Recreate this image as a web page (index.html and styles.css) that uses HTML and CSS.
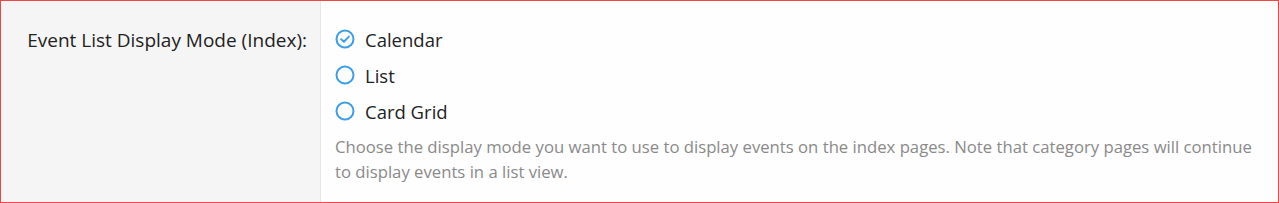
FILE: index.html
```html
<!DOCTYPE html>
<html>
    <head>
        <meta charset="UTF-8">
        <title>Event Settings</title>
        <link rel="stylesheet" href="styles.css">
    </head>
    <body>
        <div class="setting-row">
            <div class="setting-label">Event List Display Mode (Index):</div>
            <div class="setting-field">
                <label class="radio">
                    <svg class="radio-icon" viewBox="0 0 20 20" width="20" height="20">
                        <circle cx="10" cy="10" r="8.5" fill="none" stroke="#3d9fe6" stroke-width="2"/>
                        <path d="M6.2 10.2 L8.9 12.8 L13.9 7.6" fill="none" stroke="#3d9fe6" stroke-width="2" stroke-linecap="round" stroke-linejoin="round"/>
                    </svg>
                    Calendar
                </label>
                <label class="radio">
                    <svg class="radio-icon" viewBox="0 0 20 20" width="20" height="20">
                        <circle cx="10" cy="10" r="8.5" fill="none" stroke="#3d9fe6" stroke-width="2"/>
                    </svg>
                    List
                </label>
                <label class="radio">
                    <svg class="radio-icon" viewBox="0 0 20 20" width="20" height="20">
                        <circle cx="10" cy="10" r="8.5" fill="none" stroke="#3d9fe6" stroke-width="2"/>
                    </svg>
                    Card Grid
                </label>
                <p class="help">Choose the display mode you want to use to display events on the index pages. Note that category pages will continue to display events in a list view.</p>
            </div>
        </div>
    </body>
</html>
```

FILE: styles.css
```css
* {
    box-sizing: border-box;
}

body {
    margin: 0;
    background-color: #fff;
    font-family: "Open Sans", "Noto Sans", sans-serif;
    color: #222;
}

.setting-row {
    display: flex;
    width: 1279px;
    height: 203px;
    border: 1px solid #f04646;
}

.setting-label {
    width: 320px;
    flex-shrink: 0;
    background-color: #f5f5f5;
    border-right: 1px solid #e6e6e6;
    text-align: right;
    padding: 27px 13px 0 0;
    font-size: 19px;
    line-height: 24px;
}

.setting-field {
    flex: 1;
    padding: 20px 16px 0 14px;
    background-color: #fefefe;
}

.radio {
    display: flex;
    align-items: center;
    height: 36px;
    font-size: 18.5px;
}

.radio-icon {
    margin-right: 10px;
}

.help {
    margin: 5px 0 0 0;
    color: #8a8a8a;
    font-size: 16.7px;
    line-height: 25px;
}
```
